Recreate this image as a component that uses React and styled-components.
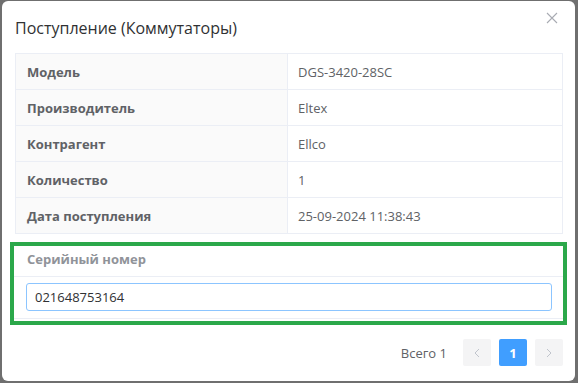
import React from 'react';
import styled, { createGlobalStyle } from 'styled-components';

const GlobalStyle = createGlobalStyle`
  html, body {
    margin: 0;
    padding: 0;
    background: #6f6f6f;
    font-family: "Open Sans", "Noto Sans", sans-serif;
  }
`;

const Dialog = styled.div`
  box-sizing: border-box;
  width: 573px;
  height: 380px;
  margin: 1px 0 0 2px;
  background: #fff;
  border-radius: 6px;
  display: flex;
  flex-direction: column;
  padding: 0 12px 0 13px;
`;

const Header = styled.div`
  height: 52px;
  display: flex;
  align-items: center;
  justify-content: space-between;
  padding-top: 1px;
  box-sizing: border-box;
`;

const Title = styled.span`
  font-size: 16px;
  color: #303133;
`;

const Close = styled.button`
  border: none;
  background: none;
  padding: 0;
  margin: -18px 3px 0 0;
  width: 14px;
  height: 14px;
  display: flex;
  cursor: pointer;
`;

const Table = styled.div`
  display: grid;
  grid-template-columns: 272px 1fr;
  border-top: 1px solid #ebeef5;
  border-left: 1px solid #ebeef5;
`;

const Cell = styled.div`
  height: 35px;
  display: flex;
  align-items: center;
  padding-left: ${p => (p.$label ? 11 : 10)}px;
  font-size: 13px;
  color: #606266;
  font-weight: ${p => (p.$label ? 700 : 400)};
  background: ${p => (p.$label ? '#fafafa' : '#fff')};
  border-right: 1px solid #ebeef5;
  border-bottom: 1px solid #ebeef5;
`;

const Highlight = styled.div`
  margin: 8px -4px 0 -5px;
  border: 4px solid #2ba84a;
  display: flex;
  flex-direction: column;
`;

const SerialHead = styled.div`
  height: 31px;
  box-sizing: border-box;
  padding: 0 0 4px 13px;
  display: flex;
  align-items: center;
  font-size: 13px;
  font-weight: 700;
  color: #909399;
  border-bottom: 1px solid #ebeef5;
`;

const SerialBody = styled.div`
  padding: 6px 11px 7px 12px;
  border-bottom: 1px solid #ebeef5;
  margin-bottom: 2px;
`;

const Input = styled.input`
  box-sizing: border-box;
  width: 100%;
  height: 28px;
  border: 1px solid #8cc5ff;
  border-radius: 3px;
  padding: 0 8px;
  font-family: "Open Sans", "Noto Sans", sans-serif;
  font-size: 13px;
  color: #303133;
  outline: none;
`;

const Footer = styled.div`
  display: flex;
  justify-content: flex-end;
  align-items: center;
  margin-top: 14px;
  gap: 8px;
`;

const Total = styled.span`
  font-size: 13px;
  color: #606266;
  margin-right: 8px;
`;

const PageBtn = styled.button`
  width: 28px;
  height: 27px;
  border: none;
  border-radius: 2px;
  padding: 0;
  display: flex;
  align-items: center;
  justify-content: center;
  font-family: "Open Sans", "Noto Sans", sans-serif;
  font-size: 13px;
  font-weight: 700;
  background: ${p => (p.$active ? '#409eff' : '#f4f4f5')};
  color: ${p => (p.$active ? '#fff' : '#c0c4cc')};
`;

const rows = [
  ['Модель', 'DGS-3420-28SC'],
  ['Производитель', 'Eltex'],
  ['Контрагент', 'Ellco'],
  ['Количество', '1'],
  ['Дата поступления', '25-09-2024 11:38:43'],
];

const Chevron = ({ left }) => (
  <svg width="8" height="10" viewBox="0 0 8 10">
    <path
      d={left ? 'M6 1 L2 5 L6 9' : 'M2 1 L6 5 L2 9'}
      fill="none"
      stroke="#c0c4cc"
      strokeWidth="1"
    />
  </svg>
);

export default function App() {
  return (
    <>
      <GlobalStyle />
      <Dialog>
        <Header>
          <Title>Поступление (Коммутаторы)</Title>
          <Close aria-label="close">
            <svg width="12" height="12" viewBox="0 0 12 12">
              <path d="M1 1 L11 11 M11 1 L1 11" stroke="#a8abb2" strokeWidth="1.1" />
            </svg>
          </Close>
        </Header>
        <Table>
          {rows.map(([k, v]) => (
            <React.Fragment key={k}>
              <Cell $label>{k}</Cell>
              <Cell>{v}</Cell>
            </React.Fragment>
          ))}
        </Table>
        <Highlight>
          <SerialHead>Серийный номер</SerialHead>
          <SerialBody>
            <Input defaultValue="021648753164" />
          </SerialBody>
        </Highlight>
        <Footer>
          <Total>Всего 1</Total>
          <PageBtn><Chevron left /></PageBtn>
          <PageBtn $active>1</PageBtn>
          <PageBtn><Chevron /></PageBtn>
        </Footer>
      </Dialog>
    </>
  );
}
